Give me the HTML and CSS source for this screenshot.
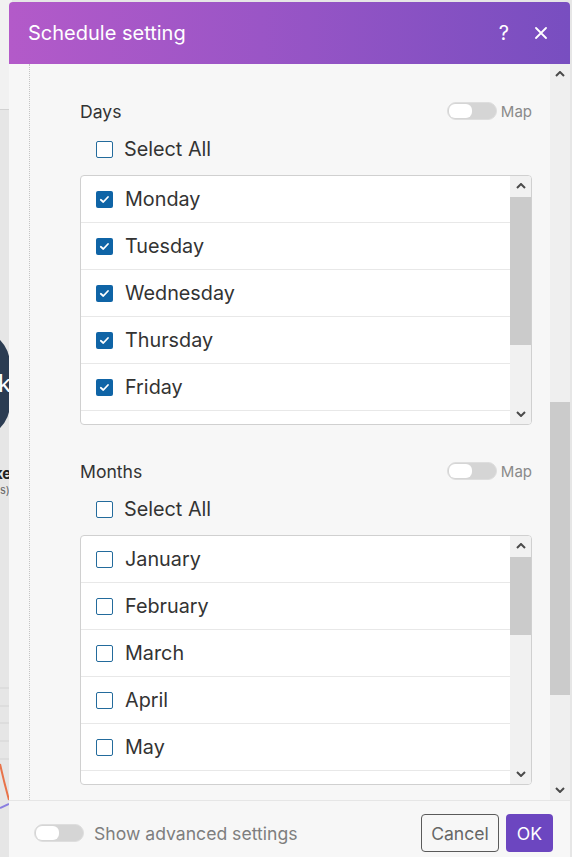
FILE: index.html
```html
<!DOCTYPE html>
<html lang="en">
<head>
<meta charset="utf-8">
<title>Schedule setting</title>
<link rel="stylesheet" href="styles.css">
</head>
<body>
<div class="backdrop">
  <div class="bg-top"></div>
  <div class="bg-node"><span class="bg-node-glyph">k</span></div>
  <div class="bg-label">ke</div>
  <div class="bg-sub">(s)</div>
  <svg class="bg-chart" width="9" height="140" viewBox="0 0 9 140">
    <line x1="0" y1="8" x2="9" y2="8" stroke="#d4d4d4" stroke-width="1"/>
    <line x1="0" y1="26" x2="9" y2="26" stroke="#d4d4d4" stroke-width="1"/>
    <line x1="0" y1="43" x2="9" y2="43" stroke="#d4d4d4" stroke-width="1"/>
    <line x1="0" y1="61" x2="9" y2="61" stroke="#d4d4d4" stroke-width="1"/>
    <line x1="0" y1="79" x2="9" y2="79" stroke="#d4d4d4" stroke-width="1"/>
    <path d="M0 84 Q4 102 9 120" fill="none" stroke="#e8734a" stroke-width="2"/>
    <path d="M0 128 L9 124" fill="none" stroke="#8a7fe0" stroke-width="2"/>
  </svg>
</div>

<div class="modal">
  <header class="modal-header">
    <h1 class="modal-title">Schedule setting</h1>
    <div class="header-actions">
      <span class="header-btn">?</span>
      <span class="header-btn close"><svg width="12" height="12" viewBox="0 0 12 12"><path d="M1 1 L11 11 M11 1 L1 11" stroke="#fff" stroke-width="1.8" stroke-linecap="round"/></svg></span>
    </div>
  </header>

  <div class="modal-body">
    <div class="content">
      <div class="content-inner">
        <section class="field">
          <div class="field-head">
            <span class="field-label">Days</span>
            <span class="map"><span class="toggle"><span class="knob"></span></span>Map</span>
          </div>
          <div class="select-all"><span class="cb"></span>Select All</div>
          <div class="listbox">
            <ul class="options">
              <li class="option"><span class="cb checked"><svg viewBox="0 0 17 17" width="17" height="17"><path d="M4.8 8.8 L7.3 11 L12 6" fill="none" stroke="#fff" stroke-width="1.8" stroke-linecap="round" stroke-linejoin="round"/></svg></span>Monday</li>
              <li class="option"><span class="cb checked"><svg viewBox="0 0 17 17" width="17" height="17"><path d="M4.8 8.8 L7.3 11 L12 6" fill="none" stroke="#fff" stroke-width="1.8" stroke-linecap="round" stroke-linejoin="round"/></svg></span>Tuesday</li>
              <li class="option"><span class="cb checked"><svg viewBox="0 0 17 17" width="17" height="17"><path d="M4.8 8.8 L7.3 11 L12 6" fill="none" stroke="#fff" stroke-width="1.8" stroke-linecap="round" stroke-linejoin="round"/></svg></span>Wednesday</li>
              <li class="option"><span class="cb checked"><svg viewBox="0 0 17 17" width="17" height="17"><path d="M4.8 8.8 L7.3 11 L12 6" fill="none" stroke="#fff" stroke-width="1.8" stroke-linecap="round" stroke-linejoin="round"/></svg></span>Thursday</li>
              <li class="option"><span class="cb checked"><svg viewBox="0 0 17 17" width="17" height="17"><path d="M4.8 8.8 L7.3 11 L12 6" fill="none" stroke="#fff" stroke-width="1.8" stroke-linecap="round" stroke-linejoin="round"/></svg></span>Friday</li>
              <li class="option option-peek"><span class="cb"></span></li>
            </ul>
            <div class="vscroll">
              <div class="sb-btn"><svg width="10" height="6" viewBox="0 0 10 6"><path d="M1 5 L5 1 L9 5" fill="none" stroke="#4a4a4a" stroke-width="2"/></svg></div>
              <div class="sb-track"><div class="sb-thumb" style="margin-top:1px;height:148px"></div></div>
              <div class="sb-btn"><svg width="10" height="6" viewBox="0 0 10 6"><path d="M1 1 L5 5 L9 1" fill="none" stroke="#4a4a4a" stroke-width="2"/></svg></div>
            </div>
          </div>
        </section>

        <section class="field">
          <div class="field-head">
            <span class="field-label">Months</span>
            <span class="map"><span class="toggle"><span class="knob"></span></span>Map</span>
          </div>
          <div class="select-all"><span class="cb"></span>Select All</div>
          <div class="listbox">
            <ul class="options">
              <li class="option"><span class="cb"></span>January</li>
              <li class="option"><span class="cb"></span>February</li>
              <li class="option"><span class="cb"></span>March</li>
              <li class="option"><span class="cb"></span>April</li>
              <li class="option"><span class="cb"></span>May</li>
              <li class="option option-peek"><span class="cb"></span></li>
            </ul>
            <div class="vscroll">
              <div class="sb-btn"><svg width="10" height="6" viewBox="0 0 10 6"><path d="M1 5 L5 1 L9 5" fill="none" stroke="#4a4a4a" stroke-width="2"/></svg></div>
              <div class="sb-track"><div class="sb-thumb" style="margin-top:1px;height:78px"></div></div>
              <div class="sb-btn"><svg width="10" height="6" viewBox="0 0 10 6"><path d="M1 1 L5 5 L9 1" fill="none" stroke="#4a4a4a" stroke-width="2"/></svg></div>
            </div>
          </div>
        </section>
      </div>
    </div>
    <div class="vscroll main">
      <div class="sb-btn"><svg width="10" height="6" viewBox="0 0 10 6"><path d="M1 5 L5 1 L9 5" fill="none" stroke="#4a4a4a" stroke-width="2"/></svg></div>
      <div class="sb-track"><div class="sb-thumb" style="margin-top:318px;height:293px"></div></div>
      <div class="sb-btn"><svg width="10" height="6" viewBox="0 0 10 6"><path d="M1 1 L5 5 L9 1" fill="none" stroke="#4a4a4a" stroke-width="2"/></svg></div>
    </div>
  </div>

  <footer class="modal-footer">
    <div class="advanced"><span class="toggle"><span class="knob"></span></span>Show advanced settings</div>
    <div class="actions">
      <button class="btn btn-cancel">Cancel</button>
      <button class="btn btn-ok">OK</button>
    </div>
  </footer>
</div>
</body>
</html>
```

FILE: styles.css
```css
* { box-sizing: border-box; }

html, body {
  margin: 0;
  padding: 0;
}

body {
  width: 572px;
  height: 857px;
  overflow: hidden;
  position: relative;
  background: #e6e6e6;
  font-family: Inter, "Noto Sans", "Liberation Sans", sans-serif;
  color: #333;
}

/* background canvas behind the modal */
.backdrop {
  position: absolute;
  inset: 0;
}
.bg-top {
  position: absolute;
  left: 0; top: 0;
  width: 12px; height: 110px;
  background: #f1f1f1;
  border-bottom: 1px solid #d2d2d2;
}
.bg-node {
  position: absolute;
  left: -60px; top: 330px;
  width: 70px; height: 108px;
  border-radius: 34px;
  background: #2b3c52;
}
.bg-node-glyph {
  position: absolute;
  left: 58px; top: 42px;
  color: #fff;
  font-weight: 400;
  font-size: 24px;
  line-height: 1;
}
.bg-label {
  position: absolute;
  left: -6px; top: 464px;
  font-weight: 700;
  font-size: 15px;
  color: #222;
}
.bg-sub {
  position: absolute;
  left: -4px; top: 483px;
  font-size: 11px;
  color: #666;
}
.bg-chart {
  position: absolute;
  left: 0; top: 680px;
}

/* modal */
.modal {
  position: absolute;
  left: 9px; top: 2px;
  right: 2px; bottom: 0;
  display: flex;
  flex-direction: column;
  background: #f7f7f7;
  border-radius: 4px 4px 0 0;
  overflow: hidden;
}

.modal-header {
  flex: 0 0 62px;
  display: flex;
  align-items: center;
  justify-content: space-between;
  padding: 0 23px 0 19px;
  background: linear-gradient(90deg, #b35ac9 0%, #9a55c6 45%, #784ec0 100%);
  color: #fff;
}
.modal-title {
  margin: 0;
  font-size: 20px;
  font-weight: 400;
}
.header-actions {
  display: flex;
  gap: 26px;
  align-items: center;
  font-size: 20px;
}
.header-btn {
  display: inline-flex;
  align-items: center;
}

.modal-body {
  flex: 1 1 auto;
  min-height: 0;
  display: flex;
}

.content {
  flex: 1 1 auto;
  min-width: 0;
  overflow: hidden;
  padding-left: 20px;
}
.content-inner {
  border-left: 1px dotted #c4c4c4;
  padding: 35px 18px 0 50px;
  height: 100%;
}

.field + .field { margin-top: 34px; }

.field-head {
  height: 24px;
  display: flex;
  align-items: center;
  justify-content: space-between;
}
.field-label {
  font-size: 17.6px;
  color: #333;
}
.map {
  display: flex;
  align-items: center;
  gap: 4px;
  font-size: 15px;
  color: #8a8a8a;
}

.toggle {
  width: 50px;
  height: 18px;
  border-radius: 9px;
  background: #d5d5d5;
  border: 1px solid #dedede;
  padding: 1px;
  display: inline-flex;
}
.knob {
  width: 23px;
  height: 14px;
  border-radius: 6px;
  background: #fff;
}

.select-all {
  margin-top: 14px;
  height: 24px;
  display: flex;
  align-items: center;
  gap: 11px;
  padding-left: 16px;
  font-size: 19.8px;
  color: #333;
}

.cb {
  flex: 0 0 17px;
  width: 17px;
  height: 17px;
  border: 1.5px solid #236b9c;
  border-radius: 2px;
  background: #fff;
  display: inline-flex;
}
.cb.checked {
  border: none;
  background: #0f64a6;
}

.listbox {
  margin-top: 14px;
  height: 250px;
  border: 1px solid #d0d0d0;
  border-radius: 4px;
  background: #fff;
  display: flex;
  overflow: hidden;
}
.options {
  list-style: none;
  margin: 0;
  padding: 0;
  flex: 1 1 auto;
  min-width: 0;
}
.option {
  height: 47px;
  border-bottom: 1px solid #e8e8e8;
  display: flex;
  align-items: center;
  gap: 12px;
  padding-left: 15px;
  font-size: 19.8px;
  color: #333;
}
.option-peek {
  border-bottom: none;
}

.vscroll {
  flex: 0 0 21px;
  display: flex;
  flex-direction: column;
  background: #f1f1f1;
}
.vscroll.main {
  flex-basis: 20px;
  background: #efefef;
}
.sb-btn {
  flex: 0 0 20px;
  display: flex;
  align-items: center;
  justify-content: center;
}
.sb-track {
  flex: 1 1 auto;
}
.sb-thumb {
  background: #cbcbcb;
}

.modal-footer {
  flex: 0 0 57px;
  border-top: 1px solid #e6e6e6;
  display: flex;
  align-items: center;
  justify-content: space-between;
  padding: 8px 17px 0 25px;
}
.advanced {
  display: flex;
  align-items: center;
  gap: 10px;
  font-size: 17.6px;
  color: #7e7e7e;
}
.actions {
  display: flex;
  gap: 7px;
}
.btn {
  height: 38px;
  border-radius: 4px;
  font-family: inherit;
  font-size: 17.6px;
  padding: 0;
  cursor: pointer;
}
.btn-cancel {
  width: 78px;
  background: #f7f7f7;
  border: 1px solid #5a5a5a;
  color: #666;
}
.btn-ok {
  width: 47px;
  background: #6c46c0;
  border: none;
  color: #fff;
}
```
